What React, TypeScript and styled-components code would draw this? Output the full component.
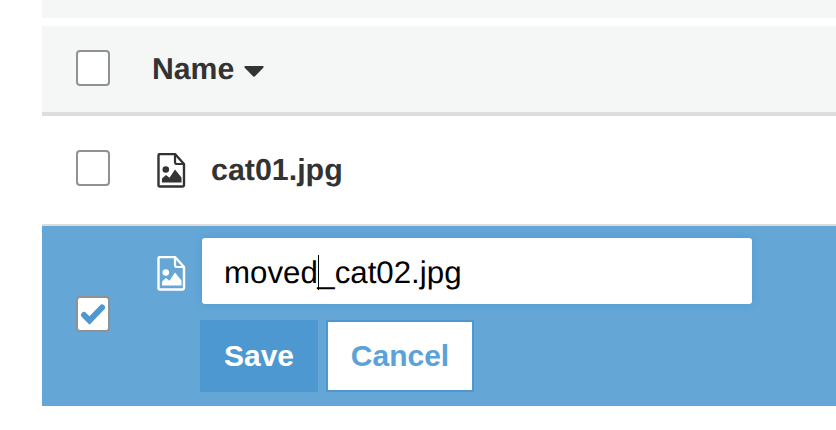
import React from "react";
import styled, { createGlobalStyle } from "styled-components";

const Global = createGlobalStyle`
  html, body { margin: 0; padding: 0; background: #fff; }
  body { font-family: "Liberation Sans", Arial, sans-serif; color: #333; overflow: hidden; text-rendering: geometricPrecision; }
`;

const Page = styled.div`
  width: 836px;
  height: 430px;
  padding-left: 42px;
  box-sizing: border-box;
  display: flex;
  flex-direction: column;
`;

const TopBand = styled.div`
  height: 18px;
  margin-bottom: 8px;
  background: #f5f7f6;
`;

const HeaderRow = styled.div`
  height: 86px;
  background: #f5f7f6;
  border-bottom: 4px solid #dddddd;
  display: flex;
  align-items: center;
  padding-left: 34px;
`;

const FileRow = styled.div`
  height: 108px;
  border-bottom: 2px solid #dddddd;
  display: flex;
  align-items: center;
  padding-left: 34px;
`;

const SelectedRow = styled.div`
  height: 180px;
  background: #64a7d7;
  display: flex;
  padding-left: 34px;
  box-sizing: border-box;
`;

const Check = styled.div<{ $offset?: number; $lift?: number }>`
  width: 34px;
  height: 36px;
  box-sizing: border-box;
  flex: none;
  background: #fff;
  border: 2px solid #8f9192;
  border-radius: 4px;
  margin-top: ${(p) => p.$offset ?? 0}px;
  margin-bottom: ${(p) => p.$lift ?? 0}px;
  display: flex;
  align-items: center;
  justify-content: center;
`;

const HeaderLabel = styled.div`
  margin-left: 42px;
  padding-top: 2px;
  font-size: 30.2px;
  font-weight: 700;
  color: #333;
  display: flex;
  align-items: center;
  gap: 10px;
`;

const Caret = styled.svg`
  width: 20px;
  height: 12px;
  display: block;
  margin-top: 1px;
`;

const FileIcon = styled.svg<{ $color: string; $offset?: number }>`
  width: 30px;
  height: 36px;
  flex: none;
  display: block;
  margin-left: 46px;
  margin-top: ${(p) => p.$offset ?? 0}px;
  color: ${(p) => p.$color};
`;

const FileName = styled.div`
  margin-left: 25px;
  font-size: 30.4px;
  font-weight: 700;
  color: #333;
`;

const EditArea = styled.div`
  margin-left: 14px;
  padding-top: 12px;
  display: flex;
  flex-direction: column;
`;

const NameField = styled.div`
  width: 550px;
  height: 66px;
  margin-left: 2px;
  box-sizing: border-box;
  padding: 4px 0 0 22px;
  background: #fff;
  border-radius: 3px;
  box-shadow: 0 0 8px rgba(77, 152, 209, 0.9);
  font-size: 31.25px;
  color: #000;
  display: flex;
  align-items: center;
`;

const TextCaret = styled.span`
  display: inline-block;
  width: 0;
  height: 35px;
  margin-top: -2px;
  border-left: 1.5px solid #000;
  margin-right: -1.5px;
`;

const Actions = styled.div`
  display: flex;
  gap: 8px;
  margin-top: 16px;
`;

const SaveButton = styled.button`
  width: 118px;
  height: 72px;
  padding: 0;
  border: 0;
  background: #4e98d1;
  color: #fff;
  font: 700 30px "Liberation Sans", Arial, sans-serif;
`;

const CancelButton = styled.button`
  width: 148px;
  height: 72px;
  padding: 0;
  box-sizing: border-box;
  border: 2px solid #4e98d1;
  background: #fff;
  color: #5aa2d8;
  font: 700 30px "Liberation Sans", Arial, sans-serif;
`;

const ImageFile = ({ color, offset }: { color: string; offset?: number }) => (
  <FileIcon $color={color} $offset={offset} viewBox="0 0 30 36">
    <path
      d="M2.500 2.500a1.500 1.500 0 0 1 1.500-1.500H19L28 11V32a1.500 1.500 0 0 1-1.500 1.500H4A1.500 1.500 0 0 1 2.500 32z"
      fill="none"
      stroke="currentColor"
      strokeWidth="2.400"
      strokeLinejoin="round"
    />
    <path d="M19 1.500V9a2 2 0 0 0 2 2H27.500" fill="none" stroke="currentColor" strokeWidth="2.200" />
    <circle cx="9.800" cy="16.500" r="3.300" fill="currentColor" />
    <path d="M6 29.500V25.500L10 22L13.500 24.700L19 16.500L25.500 24.500V29.500z" fill="currentColor" strokeLinejoin="round" />
  </FileIcon>
);

export default function App() {
  return (
    <Page>
      <Global />
      <TopBand />
      <HeaderRow>
        <Check $lift={2} />
        <HeaderLabel>
          Name
          <Caret viewBox="0 0 20 12">
            <path d="M1.500 1h17c1 0 1.400 1 .8 1.700l-8.300 8.600c-.5.500-1.500.500-2 0L.7 2.700C.1 2 .5 1 1.500 1z" fill="#333" />
          </Caret>
        </HeaderLabel>
      </HeaderRow>
      <FileRow>
        <Check $lift={4} />
        <ImageFile color="#333" offset={2} />
        <FileName>cat01.jpg</FileName>
      </FileRow>
      <SelectedRow>
        <Check $offset={70}>
          <svg width="26" height="22" viewBox="0 0 26 22">
            <path d="M4 12l5.500 5.500L22 4.500" fill="none" stroke="#4e98d1" strokeWidth="6" strokeLinejoin="miter" strokeLinecap="round" />
          </svg>
        </Check>
        <ImageFile color="#fff" offset={30} />
        <EditArea>
          <NameField>
            moved
            <TextCaret />
            _cat02.jpg
          </NameField>
          <Actions>
            <SaveButton>Save</SaveButton>
            <CancelButton>Cancel</CancelButton>
          </Actions>
        </EditArea>
      </SelectedRow>
    </Page>
  );
}
